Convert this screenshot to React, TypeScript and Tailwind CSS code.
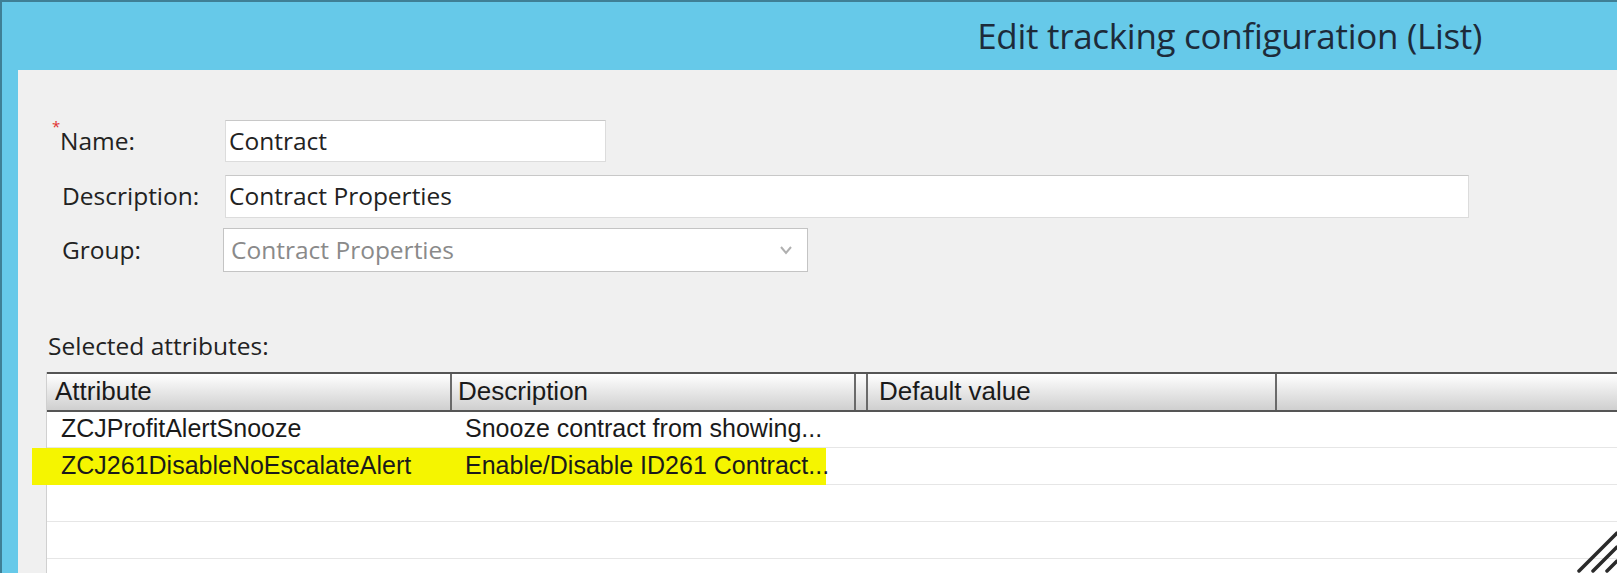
import React from 'react';

const labelFont = { fontFamily: '"Open Sans", "Noto Sans", sans-serif' };

function Grip() {
  return (
    <svg className="absolute right-0 bottom-[10px]" width="42" height="42" viewBox="0 0 42 42">
      <path d="M4 40 L42 2" stroke="#2a2a2a" strokeWidth="3.5" strokeLinecap="round" />
      <path d="M18 40 L42 16" stroke="#2a2a2a" strokeWidth="3.5" strokeLinecap="round" />
      <path d="M32 40 L42 30" stroke="#2a2a2a" strokeWidth="3.5" strokeLinecap="round" />
    </svg>
  );
}

export default function App() {
  return (
    <div className="relative w-[1617px] h-[583px] overflow-hidden bg-white">
      {/* title bar */}
      <div className="h-[70px] bg-[#66c9e9] border-t-2 border-l-2 border-[#3f7f95] flex items-center justify-end pr-[135px]">
        <span className="text-[35px] text-[#1d2b3a] tracking-[-0.3px]" style={labelFont}>
          Edit tracking configuration (List)
        </span>
      </div>

      <div className="flex h-[503px]">
        <div className="w-[18px] bg-[#66c9e9] border-l-2 border-[#3f7f95]" />

        <div className="flex-1 bg-[#f0f0f0] flex flex-col pt-[50px]">
          {/* form */}
          <div className="flex flex-col gap-[13px] pl-[34px] text-[24.5px] text-[#222]" style={labelFont}>
            <div className="flex items-center h-[42px]">
              <div className="w-[173px] flex items-start">
                <span className="text-[15px] text-[#e03030] leading-none -mt-[4px] w-[8px]">*</span>
                <span>Name:</span>
              </div>
              <div className="w-[381px] h-[42px] bg-white border border-[#dcdcdc] border-t-[#c8c8c8] flex items-center pl-[3px]">
                Contract
              </div>
            </div>
            <div className="flex items-center h-[43px]">
              <div className="w-[173px] pl-[10px]">Description:</div>
              <div className="w-[1244px] h-[43px] bg-white border border-[#dcdcdc] border-t-[#c8c8c8] flex items-center pl-[3px]">
                Contract Properties
              </div>
            </div>
            <div className="flex items-center h-[44px] -mt-[3px]">
              <div className="w-[171px] pl-[10px]">Group:</div>
              <div className="w-[585px] h-[44px] bg-white border border-[#c4c4c4] flex items-center justify-between pl-[7px] pr-[14px] text-[#8a8a8a]">
                <span>Contract Properties</span>
                <svg width="14" height="10" viewBox="0 0 14 10">
                  <path d="M2 2 L7 8 L12 2" stroke="#b0b0b0" strokeWidth="2" fill="none" />
                </svg>
              </div>
            </div>
          </div>

          <div className="pl-[30px] mt-[62px] text-[24.5px] text-[#222] leading-none" style={labelFont}>
            Selected attributes:
          </div>

          {/* table */}
          <div
            className="mt-[13px] ml-[28px] flex-1 bg-white border-l border-[#d0d0d0] text-[25px] text-[#1a1a1a]"
            style={{ fontFamily: '"Liberation Sans", Arial, sans-serif' }}
          >
            <div className="flex h-[40px] border-t-2 border-b-2 border-[#555] bg-gradient-to-b from-white to-[#cfcfcf] text-[26px]">
              <div className="w-[405px] pl-[8px] flex items-center border-r-2 border-[#6a6a6a]">Attribute</div>
              <div className="w-[404px] pl-[6px] flex items-center border-r-2 border-[#6a6a6a]">Description</div>
              <div className="w-[12px] border-r-2 border-[#6a6a6a]" />
              <div className="w-[409px] pl-[11px] flex items-center border-r-2 border-[#6a6a6a]">Default value</div>
              <div className="flex-1" />
            </div>
            <div className="flex h-[36px] items-center border-b border-[#e6e6e6]">
              <div className="w-[405px] pl-[14px]">ZCJProfitAlertSnooze</div>
              <div className="pl-[13px]">Snooze contract from showing...</div>
            </div>
            <div className="relative flex h-[37px] items-center border-b border-[#e6e6e6]">
              <div className="absolute left-[-15px] top-0 w-[794px] h-[37px] bg-[#f5f500]" />
              <div className="relative w-[405px] pl-[14px]">ZCJ261DisableNoEscalateAlert</div>
              <div className="relative pl-[13px]">Enable/Disable ID261 Contract...</div>
            </div>
            <div className="h-[37px] border-b border-[#e6e6e6]" />
            <div className="h-[37px] border-b border-[#e6e6e6]" />
          </div>
        </div>
      </div>

      <Grip />
    </div>
  );
}
